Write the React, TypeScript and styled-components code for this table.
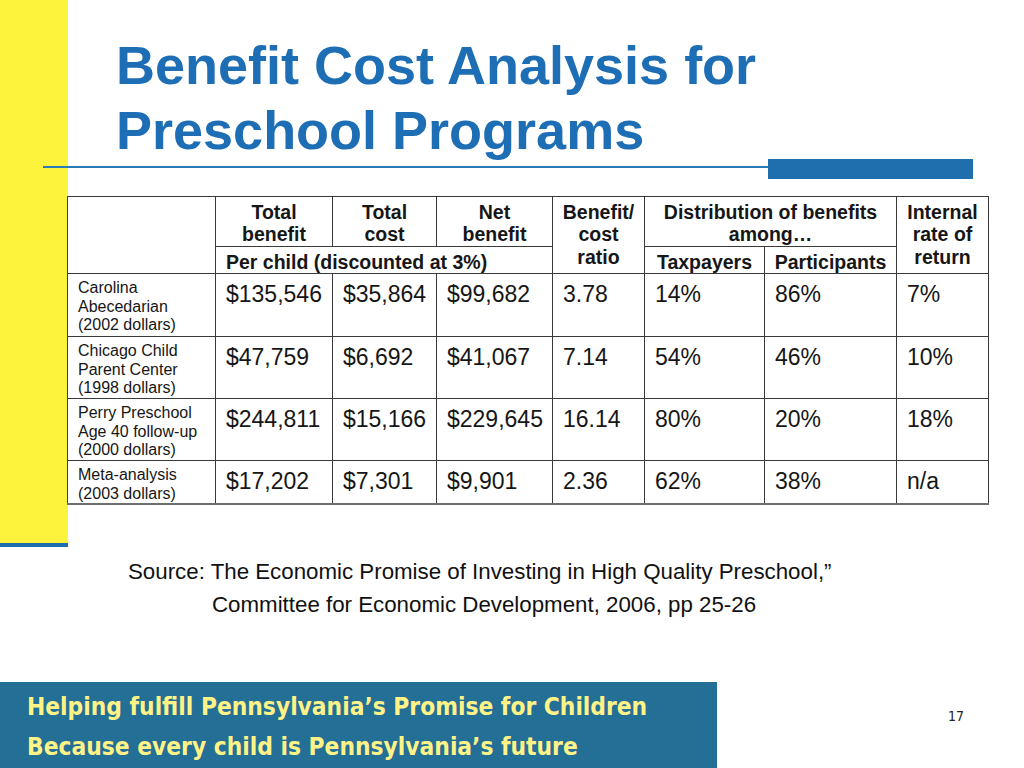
import React from "react";
import styled, { createGlobalStyle } from "styled-components";

const GlobalStyle = createGlobalStyle`
  html, body { margin: 0; padding: 0; background: #ffffff; }
  body { font-family: "Liberation Sans", Arial, sans-serif; }
`;

const Slide = styled.div`
  width: 1024px;
  height: 768px;
  overflow: hidden;
  display: flex;
  flex-direction: column;
  background: #ffffff;
`;

const Upper = styled.section`
  height: 547px;
  flex: none;
  display: flex;
  flex-direction: column;
  background:
    linear-gradient(#1f6fae, #1f6fae) 0 543px / 68px 4px no-repeat,
    linear-gradient(#fdf33c, #fdf33c) 0 0 / 68px 543px no-repeat;
`;

const Title = styled.h1`
  margin: 0;
  padding: 33px 0 0 116px;
  font: bold 54px/65px "Liberation Sans", Arial, sans-serif;
  color: #1d6eb4;
`;

const RuleRow = styled.div`
  display: flex;
  margin: -4px 0 0 43px;
`;

const ThinRule = styled.div`
  width: 725px;
  height: 2px;
  margin-top: 7px;
  background: #2a7ab8;
`;

const ThickRule = styled.div`
  width: 205px;
  height: 20px;
  background: #1f6fae;
`;

const Table = styled.table`
  margin: 17px 0 0 67px;
  width: 921px;
  border-collapse: collapse;
  table-layout: fixed;
  color: #161616;
  border-bottom: 2px solid #6e6e6e;
`;

const HeadRow = styled.tr<{ $h: number }>`
  height: ${(p) => p.$h}px;
`;

const Th = styled.th<{ $align?: "left" | "center" }>`
  border: 1px solid #3a3a3a;
  padding: 4px 6px 0 ${(p) => (p.$align === "left" ? "10px" : "6px")};
  vertical-align: top;
  text-align: ${(p) => p.$align ?? "center"};
  font: bold 19.5px/22.4px "Liberation Sans", Arial, sans-serif;
  white-space: nowrap;
`;

const DataRow = styled.tr<{ $h: number }>`
  height: ${(p) => p.$h}px;
`;

const LabelCell = styled.td`
  border: 1px solid #3a3a3a;
  padding: 5px 4px 0 10px;
  vertical-align: top;
  font: 16px/18.5px "Liberation Sans", Arial, sans-serif;
  white-space: nowrap;
`;

const NumCell = styled.td`
  border: 1px solid #3a3a3a;
  padding: 7px 4px 0 10px;
  vertical-align: top;
  font: 23px/26px "Liberation Sans", Arial, sans-serif;
  white-space: nowrap;
`;

const Source = styled.div`
  margin: 8px 0 0 0;
  font: 22.3px/33px "Liberation Sans", Arial, sans-serif;
  color: #111111;
`;

const SourceLine = styled.div<{ $indent: number }>`
  padding-left: ${(p) => p.$indent}px;
`;

const Footer = styled.footer`
  margin-top: auto;
  height: 86px;
  display: flex;
  align-items: flex-start;
`;

const Banner = styled.div`
  width: 717px;
  height: 86px;
  box-sizing: border-box;
  padding: 5px 0 0 27px;
  background: #236f96;
  display: flex;
  flex-direction: column;
`;

const BannerLine = styled.div`
  font: bold 24.3px/40px "Liberation Sans Narrow", "DejaVu Sans Condensed", "Arial Narrow", sans-serif;
  font-stretch: condensed;
  color: #fff387;
  white-space: nowrap;
`;

const PageNum = styled.div`
  margin: 26px 0 0 231px;
  font: 14px/16px "Liberation Sans Narrow", "DejaVu Sans Condensed", sans-serif;
  color: #222222;
`;

const cols = [148, 117, 104, 116, 92, 120, 132, 92];

const rows = [
  { label: ["Carolina", "Abecedarian", "(2002 dollars)"], h: 63, v: ["$135,546", "$35,864", "$99,682", "3.78", "14%", "86%", "7%"] },
  { label: ["Chicago Child", "Parent Center", "(1998 dollars)"], h: 62, v: ["$47,759", "$6,692", "$41,067", "7.14", "54%", "46%", "10%"] },
  { label: ["Perry Preschool", "Age 40 follow-up", "(2000 dollars)"], h: 62, v: ["$244,811", "$15,166", "$229,645", "16.14", "80%", "20%", "18%"] },
  { label: ["Meta-analysis", "(2003 dollars)"], h: 42, v: ["$17,202", "$7,301", "$9,901", "2.36", "62%", "38%", "n/a"] },
];

export default function App() {
  return (
    <>
      <GlobalStyle />
      <Slide>
        <Upper>
          <Title>
            Benefit Cost Analysis for
            <br />
            Preschool Programs
          </Title>
          <RuleRow>
            <ThinRule />
            <ThickRule />
          </RuleRow>
          <Table>
            <colgroup>
              {cols.map((w, i) => (
                <col key={i} style={{ width: w }} />
              ))}
            </colgroup>
            <thead>
              <HeadRow $h={50}>
                <Th rowSpan={2} />
                <Th>Total<br />benefit</Th>
                <Th>Total<br />cost</Th>
                <Th>Net<br />benefit</Th>
                <Th rowSpan={2}>Benefit/<br />cost<br />ratio</Th>
                <Th colSpan={2}>Distribution of benefits<br />among…</Th>
                <Th rowSpan={2}>Internal<br />rate of<br />return</Th>
              </HeadRow>
              <HeadRow $h={26}>
                <Th colSpan={3} $align="left">Per child (discounted at 3%)</Th>
                <Th>Taxpayers</Th>
                <Th>Participants</Th>
              </HeadRow>
            </thead>
            <tbody>
              {rows.map((r, i) => (
                <DataRow key={i} $h={r.h}>
                  <LabelCell>
                    {r.label.map((l, j) => (
                      <div key={j}>{l}</div>
                    ))}
                  </LabelCell>
                  {r.v.map((v, j) => (
                    <NumCell key={j}>{v}</NumCell>
                  ))}
                </DataRow>
              ))}
            </tbody>
          </Table>
        </Upper>
        <Source>
          <SourceLine $indent={128}>
            Source: The Economic Promise of Investing in High Quality Preschool,”
          </SourceLine>
          <SourceLine $indent={212}>
            Committee for Economic Development, 2006, pp 25-26
          </SourceLine>
        </Source>
        <Footer>
          <Banner>
            <BannerLine>Helping fulfill Pennsylvania’s Promise for Children</BannerLine>
            <BannerLine>Because every child is Pennsylvania’s future</BannerLine>
          </Banner>
          <PageNum>17</PageNum>
        </Footer>
      </Slide>
    </>
  );
}
